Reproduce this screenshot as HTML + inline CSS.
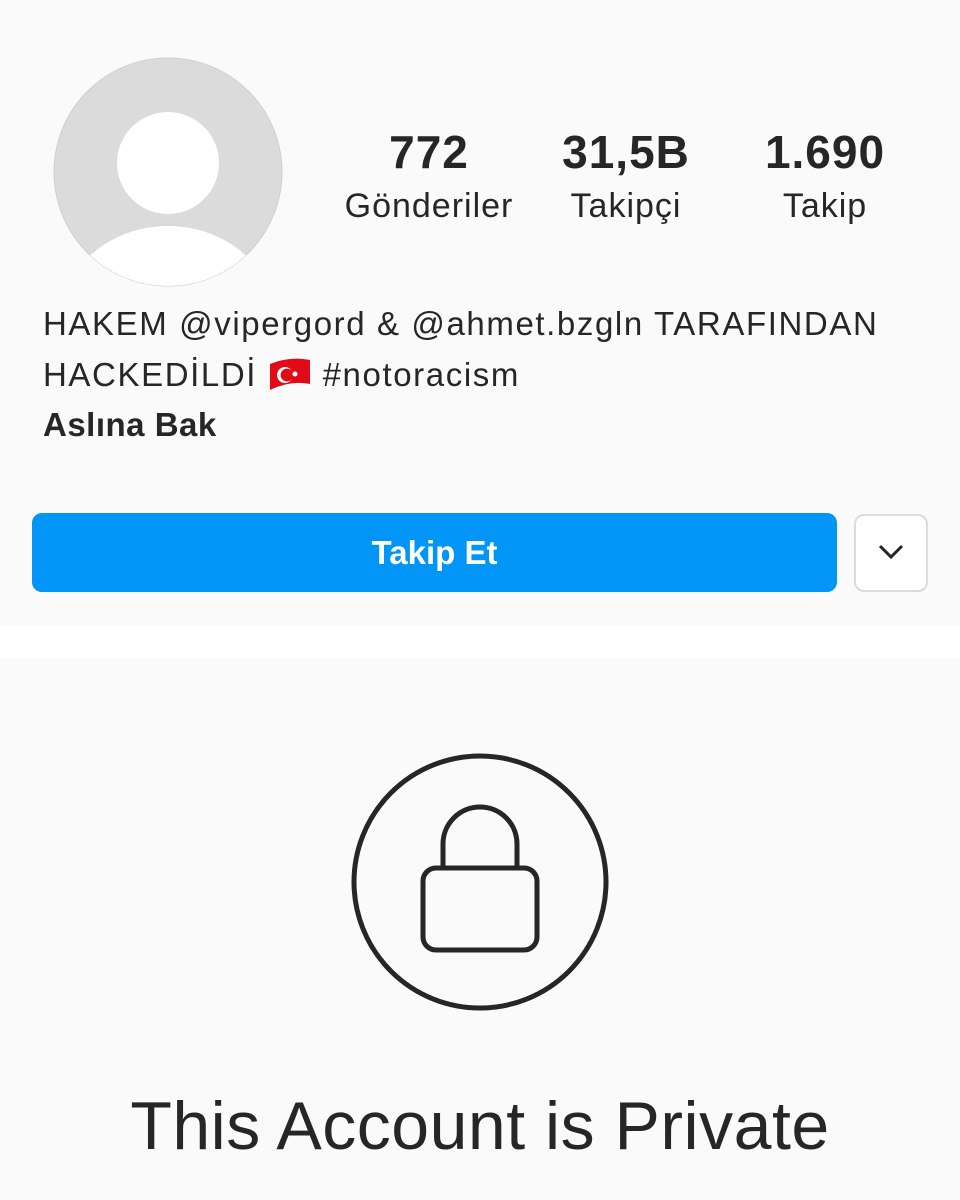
<!DOCTYPE html>
<html><head><meta charset="utf-8"><style>
html,body{margin:0;padding:0}
body{width:960px;height:1200px;background:#fafafa;position:relative;overflow:hidden;font-family:"Liberation Sans","Noto Sans CJK JP",sans-serif;color:#262626}
.a{position:absolute}
.num{font-weight:bold;font-size:46px;letter-spacing:1px;text-align:center;width:240px;line-height:1}
.lbl{font-size:34px;letter-spacing:1px;text-align:center;width:240px;line-height:1}
.bio{left:43px;font-size:33px;letter-spacing:1.6px;line-height:50px;white-space:nowrap}
</style></head><body>
<svg class="a" style="left:52px;top:56px" width="232" height="232" viewBox="0 0 232 232">
<defs><clipPath id="c"><circle cx="116" cy="116" r="114"/></clipPath></defs>
<circle cx="116" cy="116" r="114" fill="#dbdbdb" stroke="#cfcfcf" stroke-width="1"/>
<circle cx="116" cy="107" r="51" fill="#fff"/>
<g clip-path="url(#c)"><ellipse cx="116" cy="270" rx="110" ry="100" fill="#fff"/></g>
</svg>
<div class="a num" style="left:309px;top:129px">772</div>
<div class="a num" style="left:506px;top:129px">31,5B</div>
<div class="a num" style="left:705px;top:129px">1.690</div>
<div class="a lbl" style="left:309px;top:189px">Gönderiler</div>
<div class="a lbl" style="left:506px;top:189px">Takipçi</div>
<div class="a lbl" style="left:705px;top:189px">Takip</div>
<div class="a bio" style="top:299px">HAKEM @vipergord &amp; @ahmet.bzgln TARAFINDAN</div>
<div class="a bio" style="top:350px">HACKEDİLDİ <svg width="44" height="36" viewBox="0 0 44 36" style="vertical-align:-6px"><path d="M2 8 Q22 0 42 4 L42 28 Q22 24 2 34Z" fill="#e30a17"/><circle cx="17" cy="19" r="8" fill="#fff"/><circle cx="19" cy="19" r="6.4" fill="#e30a17"/><circle cx="27" cy="18" r="2.5" fill="#fff"/></svg> #notoracism</div>
<div class="a bio" style="top:400px;font-weight:bold;letter-spacing:0.5px">Aslına Bak</div>
<div class="a" style="left:32px;top:513px;width:805px;height:79px;background:#0095f6;border-radius:10px;color:#fff;font-weight:bold;font-size:33px;line-height:79px;text-align:center">Takip Et</div>
<div class="a" style="left:854px;top:514px;width:70px;height:74px;border:2px solid #dbdbdb;border-radius:10px;background:#fff"></div>
<svg class="a" style="left:876px;top:542px" width="30" height="20" viewBox="0 0 30 20"><path d="M4 4 L15 15 L26 4" fill="none" stroke="#262626" stroke-width="3"/></svg>
<div class="a" style="left:0;top:625px;width:960px;height:33px;background:#fff"></div>
<svg class="a" style="left:350px;top:752px" width="260" height="260" viewBox="0 0 260 260">
<circle cx="130" cy="130" r="126" fill="none" stroke="#262626" stroke-width="5"/>
<path d="M93 116 V92 a37 37 0 0 1 74 0 V116" fill="none" stroke="#262626" stroke-width="5"/>
<rect x="73" y="116" width="114" height="82" rx="13" fill="none" stroke="#262626" stroke-width="5"/>
</svg>
<div class="a" style="left:0;top:1086px;width:960px;text-align:center;font-size:68px;letter-spacing:0.5px;line-height:80px">This Account is Private</div>
</body></html>
